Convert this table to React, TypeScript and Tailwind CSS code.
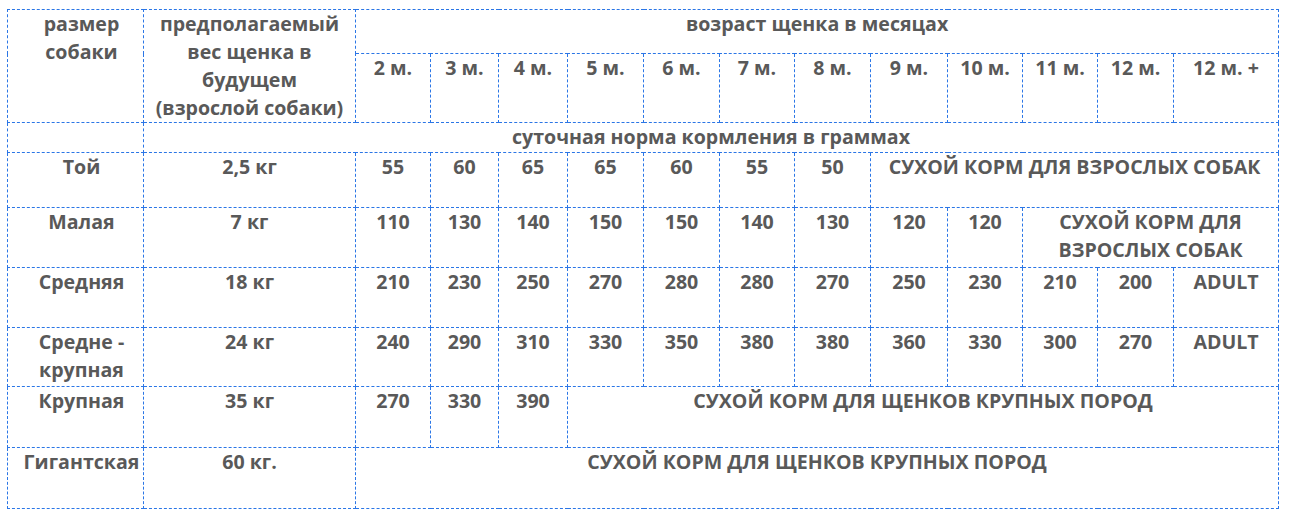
import React from "react";

const cell =
  "border border-dashed border-[#2b76e6] align-top text-center p-0";

const months = ["2 м.", "3 м.", "4 м.", "5 м.", "6 м.", "7 м.", "8 м.", "9 м.", "10 м.", "11 м.", "12 м.", "12 м. +"];
const widths = [136, 212, 75, 68, 69, 76, 76, 75, 76, 77, 75, 75, 76, 105];

export default function App() {
  return (
    <div className="bg-white w-[1293px] h-[518px] pt-[9px] pl-[7px]">
      <table
        className="table-fixed border-collapse text-[#595959] font-bold text-[19.6px] leading-[28px]"
        style={{ width: 1272, fontFamily: '"Open Sans", "Noto Sans", sans-serif' }}
      >
        <colgroup>
          {widths.map((w, i) => (
            <col key={i} style={{ width: w }} />
          ))}
        </colgroup>
        <tbody>
          <tr className="h-[44px]">
            <td rowSpan={2} className={`${cell} pl-[12px]`}>
              размер
              <br />
              собаки
            </td>
            <td rowSpan={2} className={cell}>
              предполагаемый
              <br />
              вес щенка в
              <br />
              будущем
              <br />
              (взрослой собаки)
            </td>
            <td colSpan={12} className={cell}>
              возраст щенка в месяцах
            </td>
          </tr>
          <tr className="h-[69px]">
            {months.map((m) => (
              <td key={m} className={cell}>
                {m}
              </td>
            ))}
          </tr>
          <tr className="h-[30px]">
            <td className={cell}></td>
            <td colSpan={13} className={cell}>
              суточная норма кормления в граммах
            </td>
          </tr>
          <tr className="h-[55px]">
            <td className={`${cell} pl-[12px]`}>Той</td>
            <td className={cell}>2,5 кг</td>
            {["55", "60", "65", "65", "60", "55", "50"].map((v, i) => (
              <td key={i} className={cell}>
                {v}
              </td>
            ))}
            <td colSpan={5} className={cell}>
              СУХОЙ КОРМ ДЛЯ ВЗРОСЛЫХ СОБАК
            </td>
          </tr>
          <tr className="h-[60px]">
            <td className={`${cell} pl-[12px]`}>Малая</td>
            <td className={cell}>7 кг</td>
            {["110", "130", "140", "150", "150", "140", "130", "120", "120"].map((v, i) => (
              <td key={i} className={cell}>
                {v}
              </td>
            ))}
            <td colSpan={3} className={cell}>
              СУХОЙ КОРМ ДЛЯ
              <br />
              ВЗРОСЛЫХ СОБАК
            </td>
          </tr>
          <tr className="h-[60px]">
            <td className={`${cell} pl-[12px]`}>Средняя</td>
            <td className={cell}>18 кг</td>
            {["210", "230", "250", "270", "280", "280", "270", "250", "230", "210", "200", "ADULT"].map((v, i) => (
              <td key={i} className={cell}>
                {v}
              </td>
            ))}
          </tr>
          <tr className="h-[59px]">
            <td className={`${cell} pl-[12px]`}>
              Средне -
              <br />
              крупная
            </td>
            <td className={cell}>24 кг</td>
            {["240", "290", "310", "330", "350", "380", "380", "360", "330", "300", "270", "ADULT"].map((v, i) => (
              <td key={i} className={cell}>
                {v}
              </td>
            ))}
          </tr>
          <tr className="h-[61px]">
            <td className={`${cell} pl-[12px]`}>Крупная</td>
            <td className={cell}>35 кг</td>
            {["270", "330", "390"].map((v, i) => (
              <td key={i} className={cell}>
                {v}
              </td>
            ))}
            <td colSpan={9} className={cell}>
              СУХОЙ КОРМ ДЛЯ ЩЕНКОВ КРУПНЫХ ПОРОД
            </td>
          </tr>
          <tr className="h-[61px]">
            <td className={`${cell} pl-[12px]`}>Гигантская</td>
            <td className={cell}>60 кг.</td>
            <td colSpan={12} className={cell}>
              СУХОЙ КОРМ ДЛЯ ЩЕНКОВ КРУПНЫХ ПОРОД
            </td>
          </tr>
        </tbody>
      </table>
    </div>
  );
}
